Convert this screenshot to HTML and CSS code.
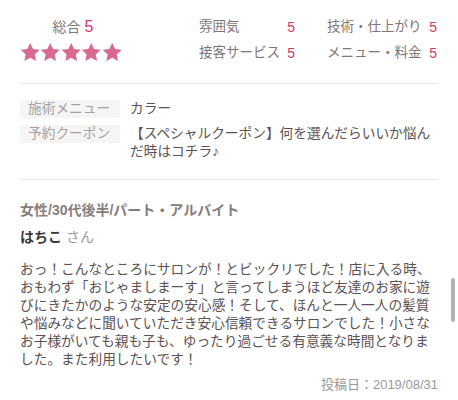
FILE: index.html
```html
<!DOCTYPE html>
<html lang="ja">
<head>
    <meta charset="UTF-8">
    <meta name="viewport" content="width=device-width, initial-scale=1.0">
    <title>口コミ</title>
    <link rel="stylesheet" href="styles.css">
</head>
<body>
    <div class="review">
        <!-- 評価 -->
        <div class="rating">
            <div class="total">
                <div class="total-label">総合 <span class="num">5</span></div>
                <div class="stars">
                    <svg viewBox="0 0 24 24"><path d="M12 .8l3.4 7.2 7.8.9-5.8 5.4 1.5 7.7L12 18.2 5.1 22l1.5-7.7L.8 8.9l7.8-.9z"/></svg>
                    <svg viewBox="0 0 24 24"><path d="M12 .8l3.4 7.2 7.8.9-5.8 5.4 1.5 7.7L12 18.2 5.1 22l1.5-7.7L.8 8.9l7.8-.9z"/></svg>
                    <svg viewBox="0 0 24 24"><path d="M12 .8l3.4 7.2 7.8.9-5.8 5.4 1.5 7.7L12 18.2 5.1 22l1.5-7.7L.8 8.9l7.8-.9z"/></svg>
                    <svg viewBox="0 0 24 24"><path d="M12 .8l3.4 7.2 7.8.9-5.8 5.4 1.5 7.7L12 18.2 5.1 22l1.5-7.7L.8 8.9l7.8-.9z"/></svg>
                    <svg viewBox="0 0 24 24"><path d="M12 .8l3.4 7.2 7.8.9-5.8 5.4 1.5 7.7L12 18.2 5.1 22l1.5-7.7L.8 8.9l7.8-.9z"/></svg>
                </div>
            </div>

            <dl class="scores">
                <div class="score"><dt>雰囲気</dt><dd>5</dd></div>
                <div class="score wide"><dt>技術・仕上がり</dt><dd>5</dd></div>
                <div class="score"><dt>接客サービス</dt><dd>5</dd></div>
                <div class="score wide"><dt>メニュー・料金</dt><dd>5</dd></div>
            </dl>
        </div>

        <!-- メニュー -->
        <div class="menu">
            <div class="menu-row">
                <span class="tag">施術メニュー</span>
                <span class="value">カラー</span>
            </div>
            <div class="menu-row">
                <span class="tag">予約クーポン</span>
                <span class="value">【スペシャルクーポン】何を選んだらいいか悩んだ時はコチラ♪</span>
            </div>
        </div>

        <!-- 本文 -->
        <div class="reviewer">
            <p class="attrs">女性/30代後半/パート・アルバイト</p>
            <p class="name"><strong>はちこ</strong> さん</p>
        </div>

        <p class="body">おっ！こんなところにサロンが！とビックリでした！店に入る時、おもわず「おじゃましまーす」と言ってしまうほど友達のお家に遊びにきたかのような安定の安心感！そして、ほんと一人一人の髪質や悩みなどに聞いていただき安心信頼できるサロンでした！小さなお子様がいても親も子も、ゆったり過ごせる有意義な時間となりました。また利用したいです！</p>

        <p class="date">投稿日：2019/08/31</p>
    </div>

    <div class="scroll-indicator"></div>
</body>
</html>
```

FILE: styles.css
```css
:root {
    --text-color: #5c5252;
    --label-color: #7f7575;
    --accent-color: #d2386a;
    --star-color: #d96a8f;
    --tag-bg: #f6f4f4;
    --tag-color: #a89f9f;
    --border-color: #e9e7e7;
    --muted-color: #9c9797;
}

* {
    margin: 0;
    padding: 0;
    box-sizing: border-box;
}

body {
    font-family: "Liberation Sans", "Noto Sans CJK JP", sans-serif;
    background-color: #ffffff;
    color: var(--text-color);
    font-size: 13.7px;
    line-height: 18px;
    position: relative;
    overflow: hidden;
}

.review {
    padding: 0 20px;
}

/* 評価 */
.rating {
    display: flex;
    justify-content: space-between;
    padding: 17px 0 20px;
    border-bottom: 1px solid var(--border-color);
}

.total {
    width: 102px;
    text-align: center;
}

.total-label {
    font-size: 14px;
    line-height: 20px;
    color: var(--label-color);
    padding-left: 4px;
}

.total-label .num {
    font-size: 16px;
    color: var(--accent-color);
}

.stars {
    display: flex;
    justify-content: space-between;
    margin-top: 5px;
}

.stars svg {
    width: 21px;
    height: 21px;
    fill: var(--star-color);
}

.scores {
    display: grid;
    grid-template-columns: 96px 110px;
    column-gap: 32px;
    row-gap: 6px;
    margin-right: 1px;
}

.score {
    display: flex;
    justify-content: space-between;
    font-size: 13.5px;
    line-height: 20px;
}

.score dt {
    color: var(--label-color);
}

.score dd {
    font-size: 14px;
    color: var(--accent-color);
}

/* メニュー */
.menu {
    display: flex;
    flex-direction: column;
    gap: 7px;
    padding: 16px 0 18px;
    border-bottom: 1px solid var(--border-color);
}

.menu-row {
    display: flex;
    align-items: flex-start;
    gap: 10px;
}

.tag {
    flex-shrink: 0;
    width: 100px;
    padding-left: 8px;
    background-color: var(--tag-bg);
    color: var(--tag-color);
}

.value {
    color: var(--text-color);
}

/* 本文 */
.reviewer {
    padding-top: 20px;
}

.attrs {
    font-size: 14px;
    line-height: 20px;
    font-weight: 700;
    color: #877d7d;
}

.name {
    margin-top: 7px;
    font-size: 14px;
    line-height: 20px;
    color: var(--muted-color);
}

.name strong {
    color: #3f3535;
}

.body {
    margin-top: 14px;
    color: var(--text-color);
}

.date {
    margin-top: 7px;
    text-align: right;
    font-size: 13px;
    color: var(--muted-color);
}

.scroll-indicator {
    position: absolute;
    top: 278px;
    left: 451px;
    width: 4px;
    height: 44px;
    border-radius: 2px;
    background-color: #b3b3b3;
}
```
